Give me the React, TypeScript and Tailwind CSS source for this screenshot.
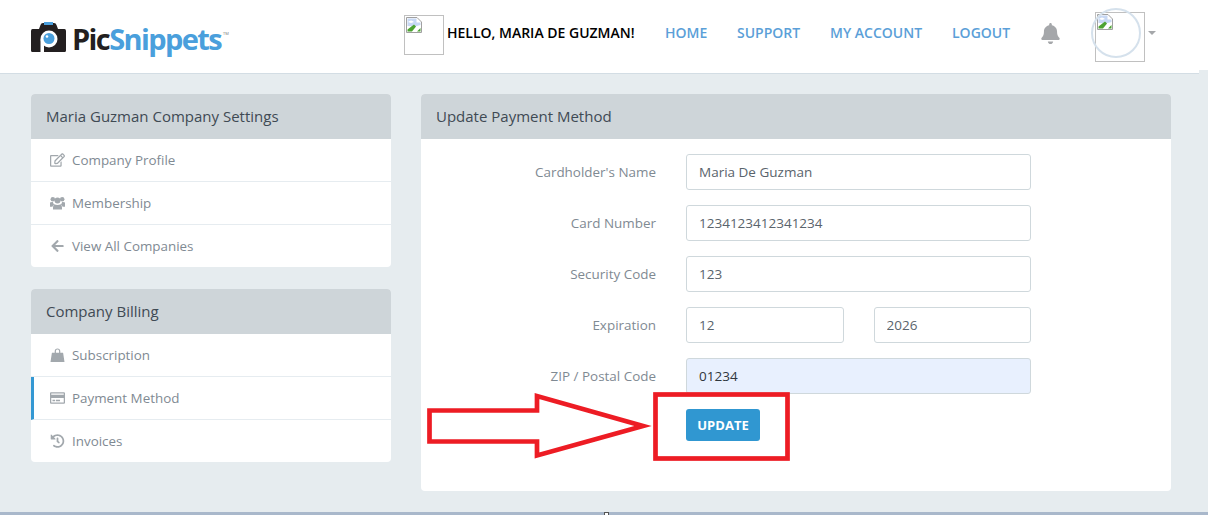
import { FaArrowLeft, FaBell, FaHistory, FaRegCreditCard, FaRegEdit } from 'react-icons/fa';
import type { IconType } from 'react-icons';

const BrokenImage = () => (
  <svg width="16" height="16" viewBox="0 0 16 16" className="block">
    <path d="M0.5 0.5H11L15.5 5V15.5H0.5Z" fill="#fff" stroke="#a0a0a0" />
    <path d="M1.5 1.5H10.5V5.5H14.5V8L9 9.5L1.5 9Z" fill="#c7d8f4" />
    <path d="M2 5C4 3 6 3 8 5L5 6Z" fill="#fff" />
    <path d="M1.5 14.5V12.5L8 7.5L10 9.5L6 14.5Z" fill="#4ca331" />
    <path d="M11 14.5L14.5 11V14.5Z" fill="#4ca331" />
  </svg>
);

const BagIcon: IconType = ({ className }) => (
  <svg viewBox="0 0 16 15" className={className}>
    <path d="M2 5H5V3.5C5 1.5 6.3 0.5 8 0.5S11 1.5 11 3.5V5H14L15.5 15H0.5ZM6.3 5H9.7V3.5C9.7 2.3 9 1.7 8 1.7S6.3 2.3 6.3 3.5Z" fill="currentColor" fillRule="evenodd" />
  </svg>
);

const UsersIcon: IconType = ({ className }) => (
  <svg viewBox="0 0 16 14" className={className}>
    <circle cx="3" cy="3" r="2.4" fill="currentColor" />
    <circle cx="13" cy="3" r="2.4" fill="currentColor" />
    <circle cx="8" cy="4.2" r="3.2" fill="currentColor" />
    <path d="M0 6.5Q1 5.8 3 6Q3.6 8 4.4 8.6Q3 9.5 2.6 11H0Z" fill="currentColor" />
    <path d="M16 6.5Q15 5.8 13 6Q12.4 8 11.6 8.6Q13 9.5 13.4 11H16Z" fill="currentColor" />
    <path d="M4.5 8.2Q6 9 8 9T11.5 8.2Q13 9.5 12.8 14H3.2Q3 9.5 4.5 8.2Z" fill="currentColor" />
  </svg>
);

const Logo = () => (
  <div className="flex items-start">
    <svg width="35" height="30" viewBox="0 0 35 30" className="block">
      <path d="M1.5 7H8L9.5 3Q10 1 12 1H23Q25 1 25.5 3L27 7H33.5Q35 7 35 9V28.5Q35 30 33.5 30H1.5Q0 30 0 28.5V9Q0 7 1.5 7Z" fill="#231f20" />
      <rect x="13" y="0" width="9" height="3" fill="#4a9fdc" />
      <circle cx="18" cy="17" r="8.5" fill="#fff" />
      <circle cx="18" cy="16.5" r="5.5" fill="#4a9fdc" />
      <circle cx="16" cy="14.5" r="1.3" fill="#fff" />
      <path d="M9.5 17V30H13V22Z" fill="#fff" />
    </svg>
    <div className="ml-[6px] mt-[-3px] text-[29px] leading-[40px] font-bold tracking-[-1.6px]">
      <span className="text-[#231f20]">Pic</span>
      <span className="text-[#4a9fdc]">Snippets</span>
    </div>
    <span className="ml-[2px] mt-[9px] text-[4px] leading-[6px] text-[#777]">TM</span>
  </div>
);

const NavLink = ({ label, className }: { label: string; className: string }) => (
  <a className={`text-[14px] leading-[20px] font-semibold text-[#5b9fd8] ${className}`}>{label}</a>
);

const Header = () => (
  <header className="flex h-[74px] w-[1199px] shrink-0 items-center border-b border-[#d3dde4] bg-white pb-[7px] pl-[31px]">
    <div className="mt-[22px] w-[373px] self-start">
      <Logo />
    </div>
    <div className="mt-[15px] flex h-[40px] w-[40px] shrink-0 items-start self-start border border-[#c0c0c0] p-[1px]">
      <BrokenImage />
    </div>
    <span className="ml-[3px] w-[218px] text-[14px] leading-[20px] font-semibold text-black">HELLO, MARIA DE GUZMAN!</span>
    <NavLink label="HOME" className="w-[72px]" />
    <NavLink label="SUPPORT" className="w-[93px]" />
    <NavLink label="MY ACCOUNT" className="w-[122px]" />
    <NavLink label="LOGOUT" className="w-[88px]" />
    <FaBell className="h-[21px] w-[21px] text-[#a5a7aa]" />
    <div className="relative ml-[34px] mt-[12px] flex h-[50px] w-[50px] items-start self-start border border-[#c0c0c0] p-[1px]">
      <BrokenImage />
      <div className="absolute left-[-5px] top-[-5px] h-[50px] w-[50px] rounded-full border-2 border-[#d5e1ec]" />
    </div>
    <div className="ml-[3px] h-0 w-0 border-x-[4px] border-t-[4px] border-x-transparent border-t-[#a5a7aa]" />
  </header>
);

type Item = { label: string; icon: IconType; active?: boolean };

const Panel = ({ title, items }: { title: string; items: Item[] }) => (
  <section className="overflow-hidden rounded-[4px] bg-white">
    <h3 className="flex h-[45px] items-center bg-[#ced5d9] px-[15px] text-[15px] font-normal text-[#3f4a54]">{title}</h3>
    {items.map((item) => (
      <div
        key={item.label}
        className={`flex h-[43px] items-center border-b border-[#e6ecf0] text-[13.4px] text-[#7f8a93] last:h-[42px] last:border-b-0 ${
          item.active ? 'border-l-[3px] border-l-[#3498d3] pl-[16px]' : 'pl-[19px]'
        }`}
      >
        <span className="flex w-[22px] justify-start">
          <item.icon className="h-[14px] w-[15px] text-[#a2a8ad]" />
        </span>
        {item.label}
      </div>
    ))}
  </section>
);

const Field = ({ label, children }: { label: string; children: React.ReactNode }) => (
  <div className="flex items-center">
    <label className="w-[235px] text-right text-[13.45px] text-[#7f8a93]">{label}</label>
    <div className="ml-[30px] flex w-[345px] gap-[30px]">{children}</div>
  </div>
);

const Input = ({ value, autofill }: { value: string; autofill?: boolean }) => (
  <input
    readOnly
    value={value}
    className={`h-[36px] w-full min-w-0 rounded-[3px] border border-[#cfd8dc] px-[12px] text-[13.5px] text-[#5a646c] outline-none ${
      autofill ? 'bg-[#e8f0fe] text-[#30373d]' : 'bg-white'
    }`}
  />
);

export default function App() {
  return (
    <div className="relative flex h-[515px] w-[1208px] flex-col overflow-hidden bg-[#e6ecef] font-['Open_Sans',sans-serif]">
      <div className="absolute right-0 top-0 h-[70px] w-[9px] bg-white" />
      <Header />
      <main className="flex flex-1 gap-[30px] pl-[31px] pt-[20px]">
        <aside className="flex w-[360px] flex-col gap-[22px]">
          <Panel
            title="Maria Guzman Company Settings"
            items={[
              { label: 'Company Profile', icon: FaRegEdit },
              { label: 'Membership', icon: UsersIcon },
              { label: 'View All Companies', icon: FaArrowLeft },
            ]}
          />
          <Panel
            title="Company Billing"
            items={[
              { label: 'Subscription', icon: BagIcon },
              { label: 'Payment Method', icon: FaRegCreditCard, active: true },
              { label: 'Invoices', icon: FaHistory },
            ]}
          />
        </aside>
        <section className="h-[397px] w-[750px] overflow-hidden rounded-[4px] bg-white">
          <h3 className="flex h-[45px] items-center bg-[#ced5d9] px-[15px] text-[15px] font-normal text-[#3f4a54]">
            Update Payment Method
          </h3>
          <form className="flex flex-col gap-[15px] pt-[15px]">
            <Field label="Cardholder's Name">
              <Input value="Maria De Guzman" />
            </Field>
            <Field label="Card Number">
              <Input value="1234123412341234" />
            </Field>
            <Field label="Security Code">
              <Input value="123" />
            </Field>
            <Field label="Expiration">
              <Input value="12" />
              <Input value="2026" />
            </Field>
            <Field label="ZIP / Postal Code">
              <Input value="01234" autofill />
            </Field>
            <div className="pl-[265px]">
              <button type="button" className="h-[32px] w-[74px] rounded-[3px] bg-[#3097d1] pt-[1px] text-[13px] font-bold text-white">
                UPDATE
              </button>
            </div>
          </form>
        </section>
      </main>
      <div className="relative h-[3px] shrink-0 bg-[#a9b8cb]">
        <div className="absolute left-[604px] top-0 h-[3px] w-[5px] border border-b-0 border-[#555] bg-white" />
      </div>
      {/* red annotation drawn over the page */}
      <svg width="380" height="80" viewBox="0 0 380 80" className="absolute left-[420px] top-[390px]">
        <path d="M9.5 20.5H117V6L223 36L117 65.5V51.5H9.5Z" fill="none" stroke="#ed1c24" strokeWidth="4.7" />
        <rect x="235.5" y="4.5" width="132" height="64" fill="none" stroke="#ed1c24" strokeWidth="4.7" />
      </svg>
    </div>
  );
}
